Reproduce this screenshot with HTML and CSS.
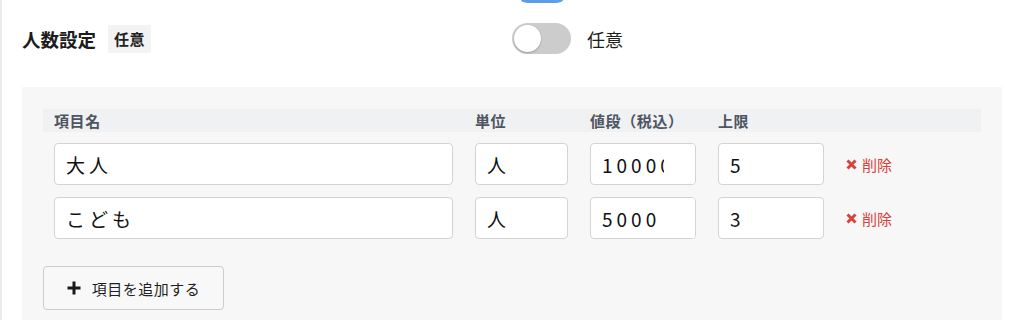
FILE: index.html
```html
<!DOCTYPE html>
<html lang="ja">
<head>
<meta charset="utf-8">
<title>人数設定</title>
<link rel="stylesheet" href="styles.css">
</head>
<body>
<div class="page">
  <div class="top-pill"></div>
  <div class="setting-row">
    <div class="setting-label">
      <span class="title">人数設定</span>
      <span class="badge">任意</span>
    </div>
    <div class="setting-value">
      <span class="toggle"><span class="knob"></span></span>
      <span class="toggle-text">任意</span>
    </div>
  </div>
  <div class="panel">
    <div class="grid head">
      <div>項目名</div>
      <div>単位</div>
      <div>値段（税込）</div>
      <div>上限</div>
      <div></div>
    </div>
    <div class="grid item">
      <input class="field" type="text" value="大人">
      <input class="field" type="text" value="人">
      <div class="clip"><input class="field" type="text" value="10000"></div>
      <input class="field" type="text" value="5">
      <span class="del"><svg class="xicon" viewBox="0 0 11 11" width="11" height="11"><path d="M1.5 1.5 L9.5 9.5 M9.5 1.5 L1.5 9.5" stroke="#d9423b" stroke-width="3"/></svg>削除</span>
    </div>
    <div class="grid item">
      <input class="field" type="text" value="こども">
      <input class="field" type="text" value="人">
      <div class="clip"><input class="field" type="text" value="5000"></div>
      <input class="field" type="text" value="3">
      <span class="del"><svg class="xicon" viewBox="0 0 11 11" width="11" height="11"><path d="M1.5 1.5 L9.5 9.5 M9.5 1.5 L1.5 9.5" stroke="#d9423b" stroke-width="3"/></svg>削除</span>
    </div>
    <button class="add" type="button"><svg class="plus" viewBox="0 0 14 14" width="14" height="14"><path d="M7 0.5 V13.5 M0.5 7 H13.5" stroke="#1a1a1a" stroke-width="3"/></svg><span>項目を追加する</span></button>
  </div>
</div>
</body>
</html>
```

FILE: styles.css
```css
html, body {
  margin: 0;
  padding: 0;
  background: #ffffff;
  overflow: hidden;
}
body {
  font-family: "Noto Sans CJK JP", "Noto Sans", sans-serif;
  color: #1f1f1f;
}
.page {
  border-left: 2px solid #ebebeb;
  padding-left: 20px;
  height: 320px;
  box-sizing: border-box;
}
.top-pill {
  margin-left: 499px;
  width: 42px;
  height: 3px;
  border-radius: 0 0 8px 8px / 0 0 3px 3px;
  background: #5b9de6;
}
.setting-row {
  display: flex;
  align-items: center;
  padding-top: 20px;
  height: 31px;
}
.setting-label {
  width: 490px;
  display: flex;
  align-items: center;
}
.title {
  font-size: 18.5px;
  font-weight: 700;
  color: #1c1c1c;
  line-height: 24px;
}
.badge {
  margin-left: 12px;
  background: #f3f3f3;
  font-size: 15px;
  font-weight: 700;
  color: #222;
  height: 28px;
  line-height: 28px;
  padding: 0 6px;
  letter-spacing: 0.5px;
}
.setting-value {
  display: flex;
  align-items: center;
}
.toggle {
  display: block;
  width: 59px;
  height: 31px;
  border-radius: 16px;
  background: #cccccc;
  box-sizing: border-box;
  padding: 2px;
}
.knob {
  display: block;
  width: 27px;
  height: 27px;
  border-radius: 50%;
  background: #fff;
  box-shadow: 0 1px 2px rgba(0,0,0,0.25);
}
.toggle-text {
  margin-left: 16px;
  font-size: 18px;
  color: #1f1f1f;
}
.panel {
  margin-top: 33px;
  width: 980px;
  box-sizing: border-box;
  background: #f7f7f7;
  padding: 22px 21px 0;
  height: 233px;
}
.grid {
  display: grid;
  grid-template-columns: 399px 93px 106px 106px auto;
  column-gap: 22px;
  padding: 0 11px;
}
.head {
  background: #f0f1f3;
  height: 23px;
  line-height: 23px;
  font-size: 15px;
  letter-spacing: 0.6px;
  font-weight: 700;
  color: #4d5561;
}
.item {
  margin-top: 11px;
  align-items: center;
}
.item + .item {
  margin-top: 12px;
}
.field {
  display: block;
  box-sizing: border-box;
  width: 100%;
  height: 42px;
  border: 1px solid #d3d3d3;
  border-radius: 4px;
  background: #fff;
  padding: 0 11px;
  font-family: "Noto Sans CJK JP", "Noto Sans", sans-serif;
  font-size: 19px;
  letter-spacing: 4px;
  color: #111;
  outline: none;
}
.clip {
  position: relative;
}
.clip::after {
  content: "";
  position: absolute;
  top: 1px;
  bottom: 1px;
  right: 1px;
  width: 31px;
  background: #fff;
  border-radius: 0 3px 3px 0;
}
.del {
  display: flex;
  align-items: center;
  margin-left: -1px;
  color: #d9423b;
  font-size: 15px;
}
.xicon {
  margin-left: 1px;
  margin-right: 5px;
}
.add {
  margin-top: 27px;
  width: 181px;
  height: 44px;
  box-sizing: border-box;
  border: 1px solid #cdcdcd;
  border-radius: 4px;
  background: #f8f8f8;
  display: flex;
  align-items: center;
  justify-content: center;
  gap: 11px;
  padding: 0;
  font-family: "Noto Sans CJK JP", "Noto Sans", sans-serif;
  font-size: 15px;
  letter-spacing: 0.5px;
  color: #1f1f1f;
}
```
